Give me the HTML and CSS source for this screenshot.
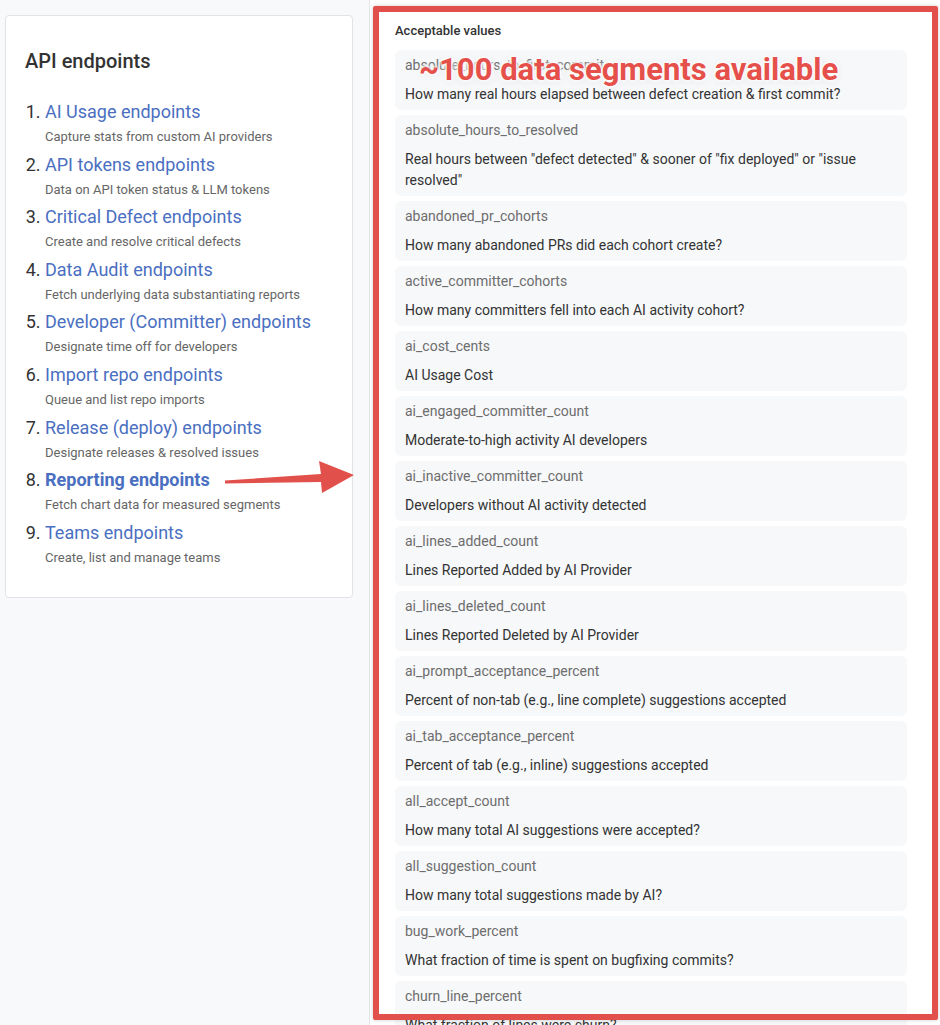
FILE: index.html
```html
<!DOCTYPE html>
<html lang="en">
<head>
  <meta charset="UTF-8">
  <title>API endpoints</title>
  <link rel="stylesheet" href="styles.css">
</head>
<body>
  <aside class="sidebar">
    <div class="card">
      <h1>API endpoints</h1>
      <ol class="endpoints">
        <li><a href="#">AI Usage endpoints</a><p>Capture stats from custom AI providers</p></li>
        <li><a href="#">API tokens endpoints</a><p>Data on API token status &amp; LLM tokens</p></li>
        <li><a href="#">Critical Defect endpoints</a><p>Create and resolve critical defects</p></li>
        <li><a href="#">Data Audit endpoints</a><p>Fetch underlying data substantiating reports</p></li>
        <li><a href="#">Developer (Committer) endpoints</a><p>Designate time off for developers</p></li>
        <li><a href="#">Import repo endpoints</a><p>Queue and list repo imports</p></li>
        <li><a href="#">Release (deploy) endpoints</a><p>Designate releases &amp; resolved issues</p></li>
        <li class="active"><a href="#">Reporting endpoints</a><p>Fetch chart data for measured segments</p></li>
        <li><a href="#">Teams endpoints</a><p>Create, list and manage teams</p></li>
      </ol>
    </div>
  </aside>

  <main class="content">
    <div class="label">Acceptable values</div>
    <div class="values">
      <div class="value"><div class="name">absolute_hours_to_first_commit</div><div class="desc">How many real hours elapsed between defect creation &amp; first commit?</div></div>
      <div class="value"><div class="name">absolute_hours_to_resolved</div><div class="desc">Real hours between "defect detected" &amp; sooner of "fix deployed" or "issue resolved"</div></div>
      <div class="value"><div class="name">abandoned_pr_cohorts</div><div class="desc">How many abandoned PRs did each cohort create?</div></div>
      <div class="value"><div class="name">active_committer_cohorts</div><div class="desc">How many committers fell into each AI activity cohort?</div></div>
      <div class="value"><div class="name">ai_cost_cents</div><div class="desc">AI Usage Cost</div></div>
      <div class="value"><div class="name">ai_engaged_committer_count</div><div class="desc">Moderate-to-high activity AI developers</div></div>
      <div class="value"><div class="name">ai_inactive_committer_count</div><div class="desc">Developers without AI activity detected</div></div>
      <div class="value"><div class="name">ai_lines_added_count</div><div class="desc">Lines Reported Added by AI Provider</div></div>
      <div class="value"><div class="name">ai_lines_deleted_count</div><div class="desc">Lines Reported Deleted by AI Provider</div></div>
      <div class="value"><div class="name">ai_prompt_acceptance_percent</div><div class="desc">Percent of non-tab (e.g., line complete) suggestions accepted</div></div>
      <div class="value"><div class="name">ai_tab_acceptance_percent</div><div class="desc">Percent of tab (e.g., inline) suggestions accepted</div></div>
      <div class="value"><div class="name">all_accept_count</div><div class="desc">How many total AI suggestions were accepted?</div></div>
      <div class="value"><div class="name">all_suggestion_count</div><div class="desc">How many total suggestions made by AI?</div></div>
      <div class="value"><div class="name">bug_work_percent</div><div class="desc">What fraction of time is spent on bugfixing commits?</div></div>
      <div class="value"><div class="name">churn_line_percent</div><div class="desc">What fraction of lines were churn?</div></div>
    </div>
  </main>

  <!-- annotation layer -->
  <div class="highlight"></div>
  <div class="callout">~100 data segments available</div>
  <svg class="arrow" width="940" height="1025" viewBox="0 0 940 1025">
    <polygon points="225,480.5 321,474 319,461 354,475 322,493 321,482 225,483.5" fill="#e2504b"/>
  </svg>
</body>
</html>
```

FILE: styles.css
```css
* {
  box-sizing: border-box;
}
body {
  margin: 0;
  height: 1025px;
  overflow: hidden;
  display: flex;
  font-family: Roboto, 'Liberation Sans', sans-serif;
  background: #f8f9fb;
  color: #333;
}
.sidebar {
  width: 369px;
  flex-shrink: 0;
  padding: 15px 16px 0 5px;
}
.card {
  background: #fff;
  border: 1px solid #e1e3e7;
  border-radius: 4px;
  height: 583px;
  padding: 33px 19px 0;
}
.card h1 {
  margin: 0 0 27px;
  font-size: 20px;
  line-height: 24px;
  font-weight: 500;
  color: #333;
}
.endpoints {
  margin: 0;
  padding-left: 20px;
}
.endpoints li {
  font-size: 18px;
  line-height: 24px;
  color: #333;
  margin-bottom: 6.6px;
}
.endpoints a {
  color: #4a6fc1;
  text-decoration: none;
}
.endpoints li.active a {
  font-weight: 700;
}
.endpoints p {
  margin: 4px 0 0;
  font-size: 13px;
  line-height: 18px;
  color: #666;
}
.content {
  flex: 1;
  background: #fff;
  border-left: 1px solid #e3e5e8;
  padding: 22px 33px 0 25px;
}
.label {
  font-size: 13px;
  line-height: 18px;
  font-weight: 500;
  color: #333;
  margin-bottom: 10px;
}
.values {
  display: flex;
  flex-direction: column;
  gap: 5px;
}
.value {
  background: #f7f8fa;
  border-radius: 6px;
  padding: 5px 10px 5px;
}
.name {
  font-size: 14px;
  line-height: 20px;
  color: #6d6d6d;
  margin-bottom: 9px;
}
.desc {
  font-size: 14px;
  line-height: 21px;
  color: #333;
}
.highlight {
  position: absolute;
  left: 373px;
  top: 6px;
  width: 565px;
  height: 1014px;
  border: 6px solid #e2504b;
  border-radius: 2px;
  box-shadow: 0 0 4px rgba(0, 0, 0, 0.18);
}
.callout {
  position: absolute;
  left: 419px;
  top: 52px;
  font-size: 31px;
  line-height: 36px;
  font-weight: 700;
  color: #e5504b;
  text-shadow: 0 0 2px #fff, 0 0 3px #fff, 0 0 4px #fff, 0 0 6px #fff, 0 1px 8px rgba(0, 0, 0, 0.12);
}
.arrow {
  position: absolute;
  left: 0;
  top: 0;
}
```
